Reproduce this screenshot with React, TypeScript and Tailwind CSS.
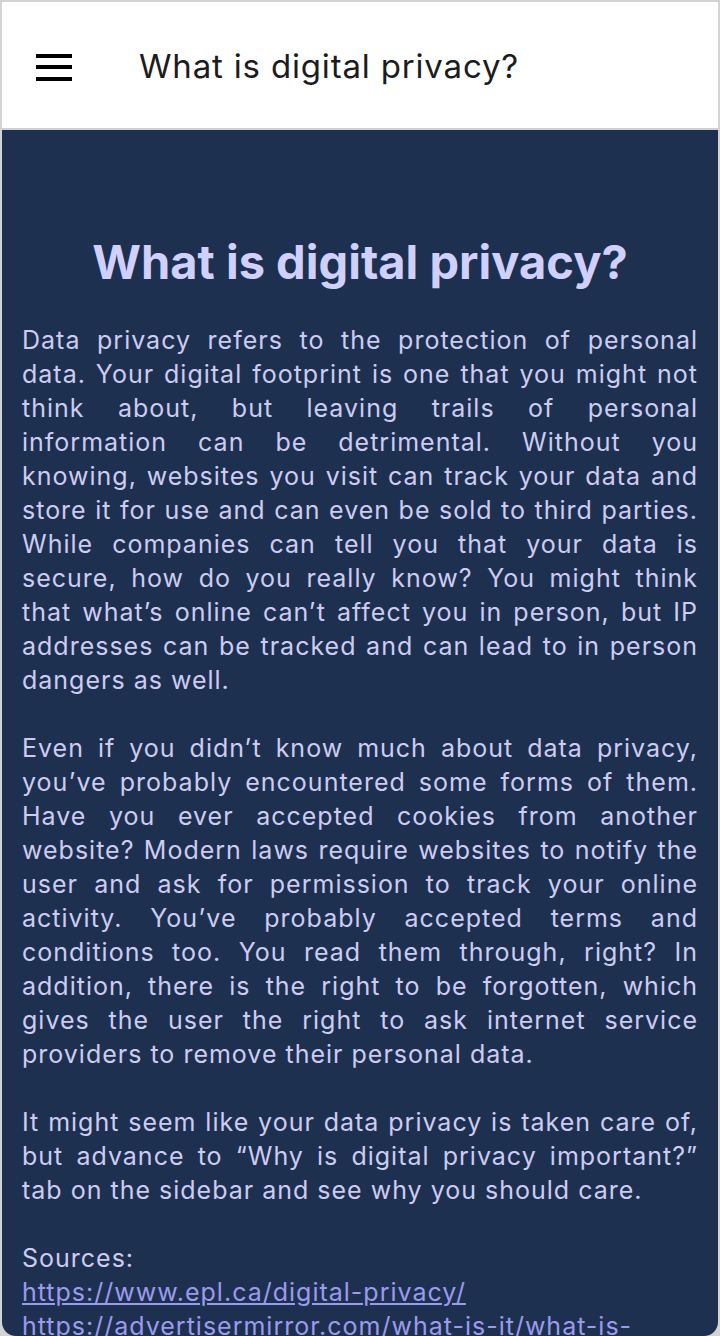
import React from "react";

export default function App() {
  return (
    <div className="h-[1336px] w-[720px] overflow-hidden bg-[#d4d4d4] pt-[2px] px-[2px]" style={{ fontFamily: "Inter, 'Noto Sans', sans-serif" }}>
      <div className="flex h-[128px] items-center bg-white border-b-2 border-[#d0d0d0] pt-[4px]">
        <div className="ml-[34px] flex w-[36px] flex-col gap-[7.5px]">
          <div className="h-[4px] bg-black" />
          <div className="h-[4px] bg-black" />
          <div className="h-[4px] bg-black" />
        </div>
        <h1 className="ml-[67px] text-[33px] font-normal text-[#1c1c1e] tracking-[0.025em]">What is digital privacy?</h1>
      </div>
      <div className="h-[1206px] overflow-hidden rounded-b-[14px] bg-[#1e3050] px-[20px] pt-[102px]">
        <h2 className="text-center text-[47px] font-bold leading-[60px] text-[#d0d0ff]">What is digital privacy?</h2>
        <div className="mt-[31px] text-[25px] leading-[34px] tracking-[0.04em] text-[#ccccf2]">
          <p className="text-justify">
            Data privacy refers to the protection of personal data. Your digital footprint is one that you might not think about, but leaving trails of personal information can be detrimental. Without you knowing, websites you visit can track your data and store it for use and can even be sold to third parties. While companies can tell you that your data is secure, how do you really know? You might think that what’s online can’t affect you in person, but IP addresses can be tracked and can lead to in person dangers as well.
          </p>
          <p className="mt-[34px] text-justify">
            Even if you didn’t know much about data privacy, you’ve probably encountered some forms of them. Have you ever accepted cookies from another website? Modern laws require websites to notify the user and ask for permission to track your online activity. You’ve probably accepted terms and conditions too. You read them through, right? In addition, there is the right to be forgotten, which gives the user the right to ask internet service providers to remove their personal data.
          </p>
          <p className="mt-[34px] text-justify">
            It might seem like your data privacy is taken care of, but advance to “Why is digital privacy important?” tab on the sidebar and see why you should care.
          </p>
          <p className="mt-[34px]">Sources:</p>
          <a className="block text-[#9b9bec] underline" href="#">https://www.epl.ca/digital-privacy/</a>
          <a className="block text-[#9b9bec] underline" href="#">https://advertisermirror.com/what-is-it/what-is- digital-privacy/</a>
        </div>
      </div>
    </div>
  );
}
